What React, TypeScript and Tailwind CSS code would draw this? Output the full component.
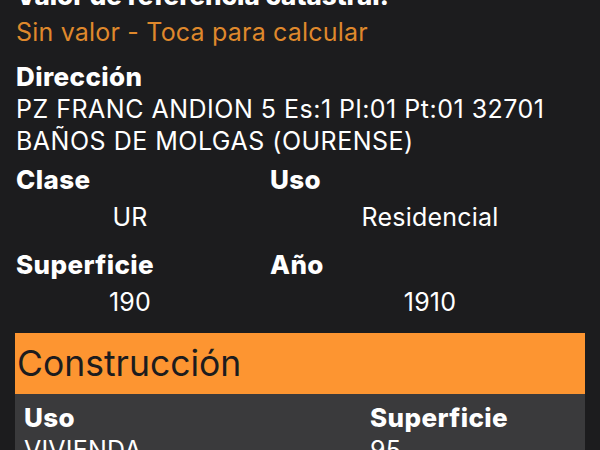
export default function App() {
  const label = "h-[32px] leading-[32px] text-[26px] font-extrabold tracking-[0.4px]";
  const value = "h-[32px] leading-[32px] text-[25px] tracking-[0.2px]";
  return (
    <div className="w-[600px] h-[450px] overflow-hidden bg-[#1c1c1e] text-white font-['Inter','Liberation_Sans',sans-serif]">
      <div className="-mt-[20px] pl-4 pr-4">
        <div className="h-[32px] leading-[32px] text-[26px] font-extrabold whitespace-nowrap">Valor de referencia catastral:</div>
        <div className="mt-[4px] h-[32px] leading-[32px] text-[25px] tracking-[0.2px] text-[#df882c]">Sin valor - Toca para calcular</div>

        <div className={"mt-[13px] " + label}>Dirección</div>
        <div className="text-[25px] leading-[32px] tracking-[0.5px] whitespace-nowrap">
          PZ FRANC ANDION 5 Es:1 Pl:01 Pt:01 32701
          <br />
          BAÑOS DE MOLGAS (OURENSE)
        </div>

        <div className="mt-[7px] grid grid-cols-[254px_1fr]">
          <div className="flex flex-col">
            <div className={label}>Clase</div>
            <div className={"mt-[5px] w-[228px] text-center " + value}>UR</div>
          </div>
          <div className="flex flex-col">
            <div className={label}>Uso</div>
            <div className={"mt-[5px] w-[320px] text-center " + value}>Residencial</div>
          </div>
        </div>

        <div className="mt-[16px] grid grid-cols-[254px_1fr]">
          <div className="flex flex-col">
            <div className={label}>Superficie</div>
            <div className={"mt-[5px] w-[228px] text-center " + value}>190</div>
          </div>
          <div className="flex flex-col">
            <div className={label}>Año</div>
            <div className={"mt-[5px] w-[320px] text-center " + value}>1910</div>
          </div>
        </div>
      </div>

      <div className="mx-[15px] mt-[15px]">
        <div className="h-[61px] bg-[#fd9531] flex items-center pl-[2px]">
          <span className="text-[35.5px] text-[#1c1c1e] leading-none">Construcción</span>
        </div>
        <div className="bg-[#3a3a3c] h-[120px] pt-[8px] pl-[9px] grid grid-cols-[346px_1fr]">
          <div>
            <div className={label}>Uso</div>
            <div className={value}>VIVIENDA</div>
          </div>
          <div>
            <div className={label}>Superficie</div>
            <div className={value}>95</div>
          </div>
        </div>
      </div>
    </div>
  );
}
